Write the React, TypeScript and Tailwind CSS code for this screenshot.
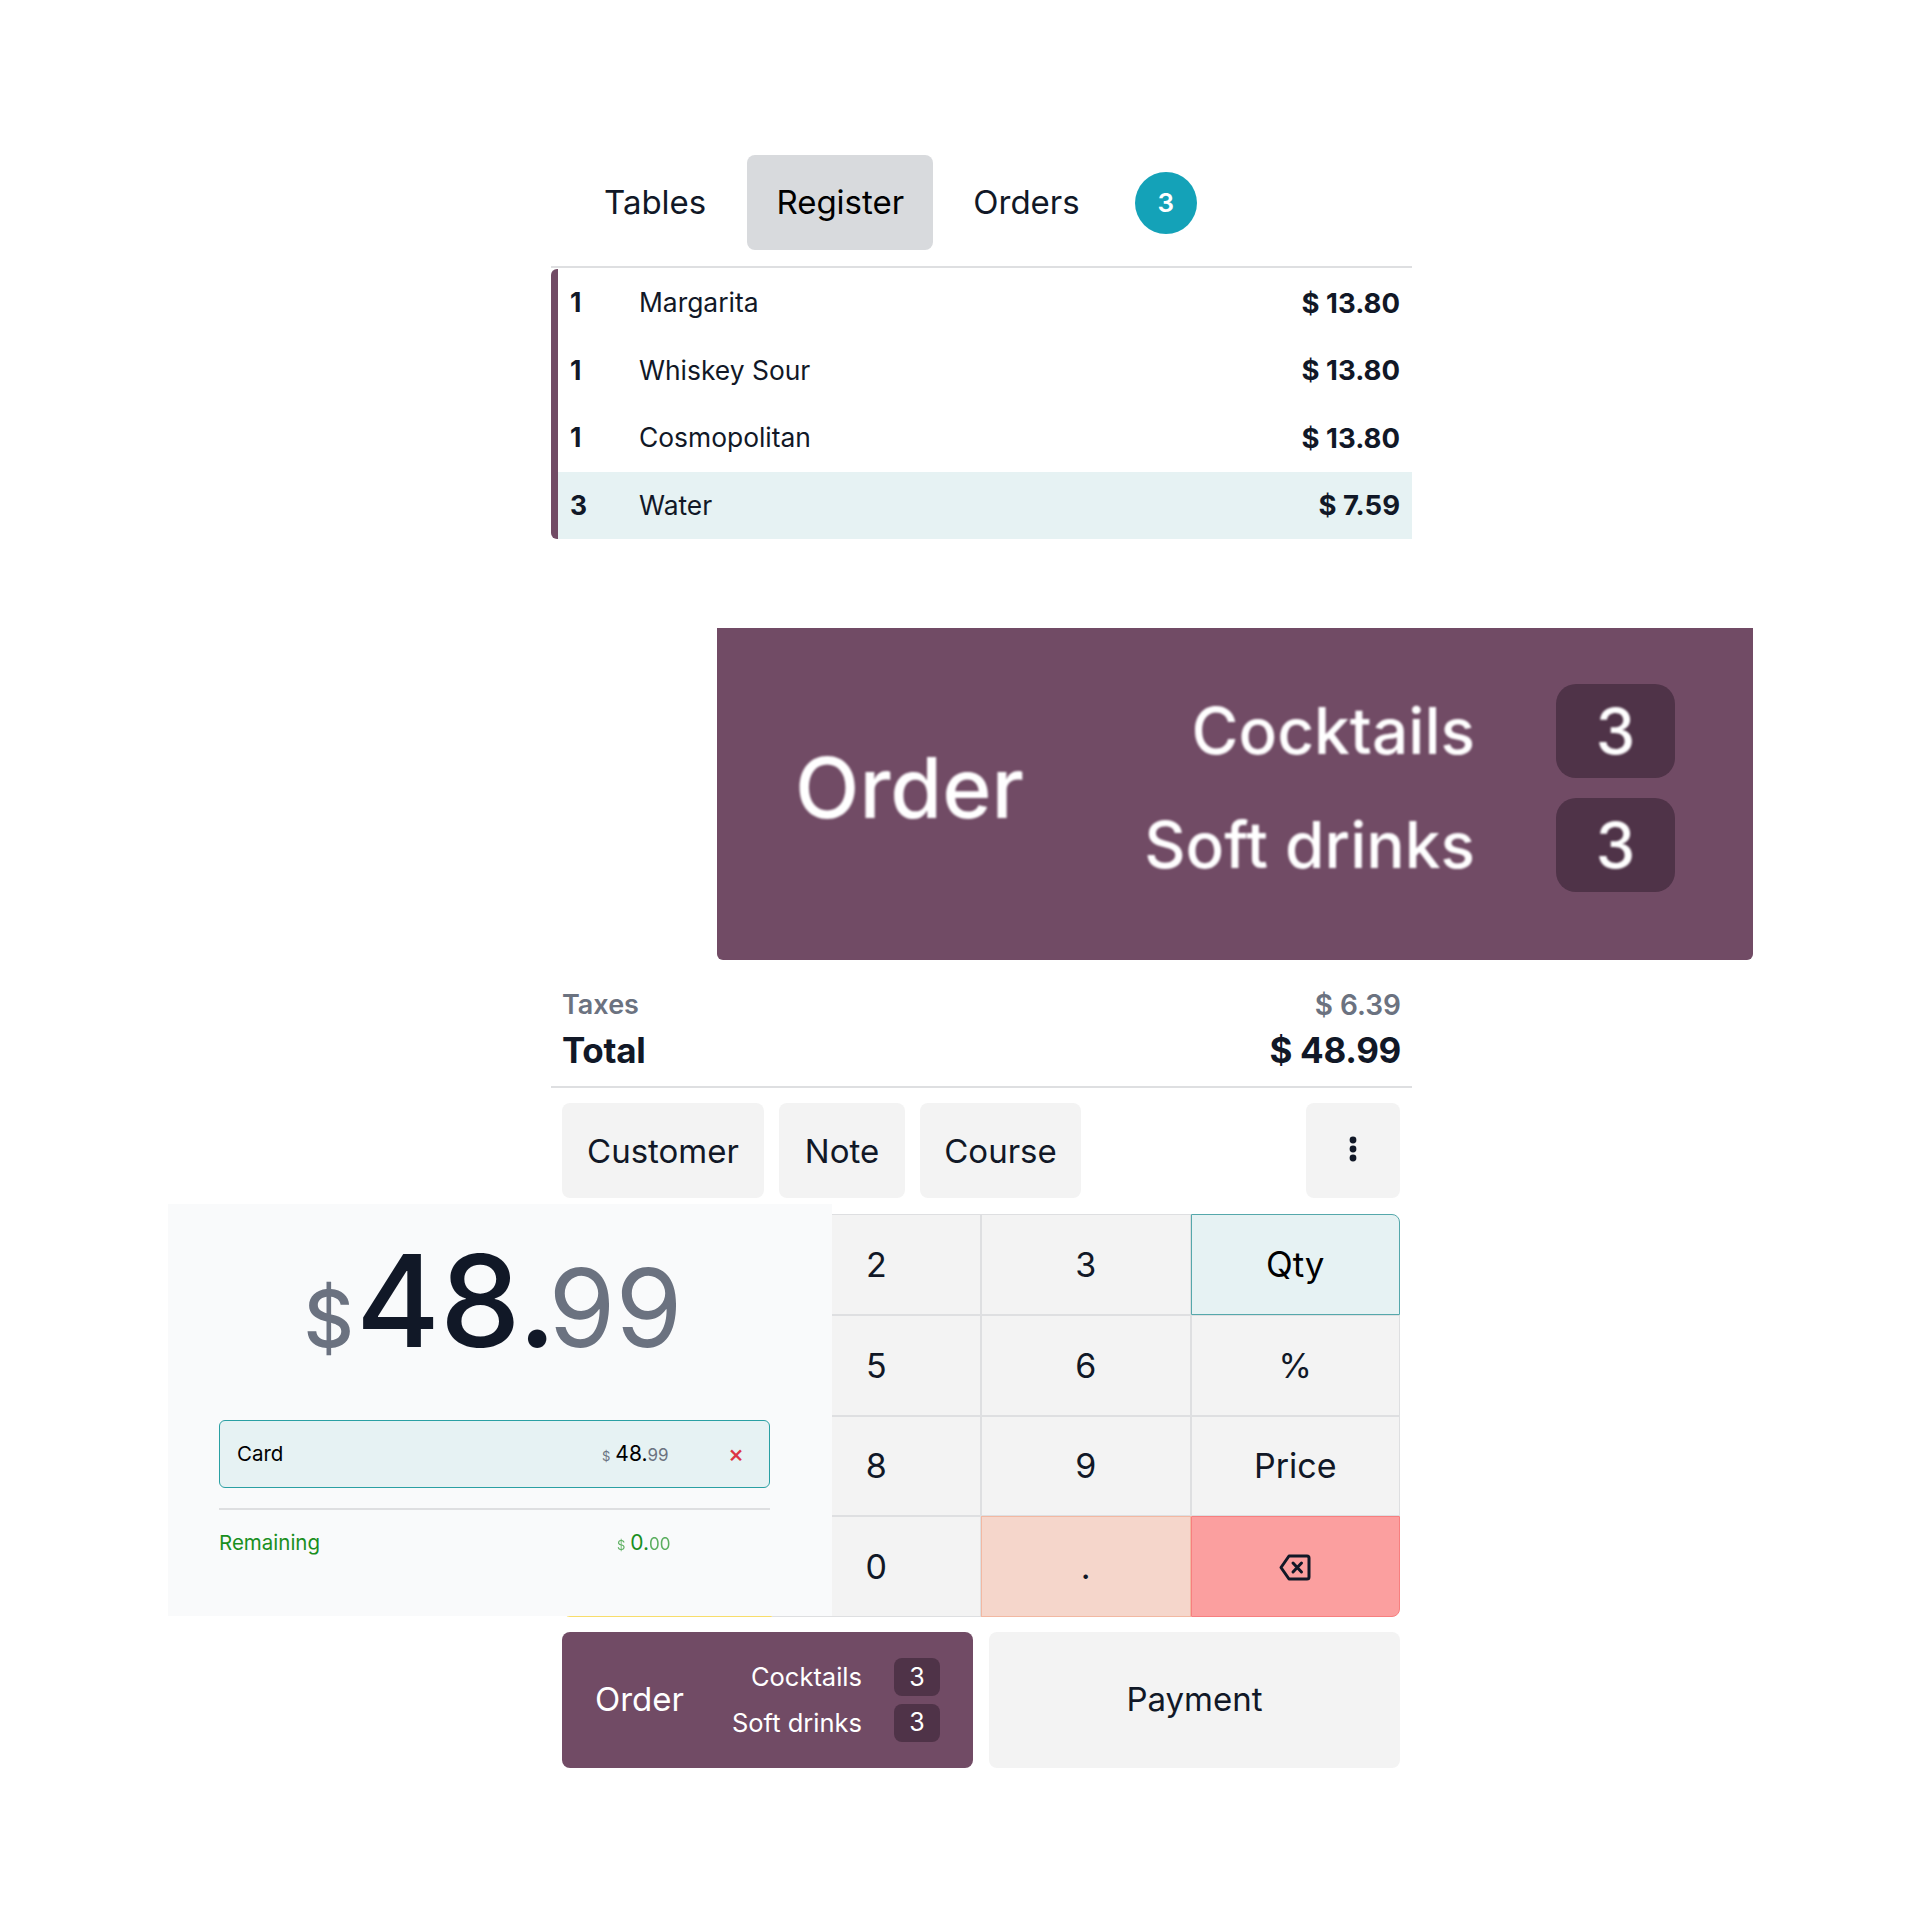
import type { ReactNode } from "react";

const items = [
  { qty: 1, name: "Margarita", price: "$ 13.80" },
  { qty: 1, name: "Whiskey Sour", price: "$ 13.80" },
  { qty: 1, name: "Cosmopolitan", price: "$ 13.80" },
  { qty: 3, name: "Water", price: "$ 7.59", selected: true },
];

function BackspaceIcon() {
  return (
    <svg width="32" height="27" viewBox="0 0 32 27" fill="none" stroke="#111827" strokeWidth="3" strokeLinejoin="round" strokeLinecap="round">
      <path d="M10 2h18a2 2 0 0 1 2 2v19a2 2 0 0 1-2 2H10l-8-11.500z" />
      <path d="M14 9l8.500 9M22.500 9l-8.500 9" />
    </svg>
  );
}

function Key({ children, className = "" }: { children?: ReactNode; className?: string }) {
  return (
    <div className={`flex items-center justify-center border pt-[1px] text-[34px] leading-none text-[#111827] ${className}`}>
      {children}
    </div>
  );
}

const plain = "border-[#dedfe1] bg-[#f3f3f3]";

function Keypad() {
  return (
    <div className="mt-4 ml-[11px] mr-[12px] grid h-[403px] grid-cols-4 grid-rows-4">
      <Key className={`rounded-tl-lg ${plain}`} />
      <Key className={plain}>2</Key>
      <Key className={plain}>3</Key>
      <Key className="rounded-tr-lg border-[#55a8ab] bg-[#e6f2f3]">
        <span className="text-[35px] text-black">Qty</span>
      </Key>
      <Key className={plain} />
      <Key className={plain}>5</Key>
      <Key className={plain}>6</Key>
      <Key className={plain}>%</Key>
      <Key className={plain} />
      <Key className={plain}>8</Key>
      <Key className={plain}>9</Key>
      <Key className={plain}>Price</Key>
      <Key className="rounded-bl-lg border-[#f8dd6b] bg-[#fdf5c9]" />
      <Key className={plain}>0</Key>
      <Key className="border-[#f2b8a2] bg-[#f5d6cb]">.</Key>
      <Key className="rounded-br-lg border-[#f77f7f] bg-[#fb9f9f]">
        <BackspaceIcon />
      </Key>
    </div>
  );
}

function ActionButton({ label, className }: { label: string; className: string }) {
  return (
    <button className={`flex h-[95px] items-center justify-center rounded-lg bg-[#f3f3f3] pt-[2px] text-[33px] text-[#111827] ${className}`}>
      {label}
    </button>
  );
}

function OrderSmall() {
  return (
    <div className="flex h-[136px] w-[411px] items-center justify-between rounded-lg bg-[#714b65] px-[33px] text-white">
      <span className="text-[33px]">Order</span>
      <div className="flex flex-col items-end gap-[7px]">
        {["Cocktails", "Soft drinks"].map((label) => (
          <div key={label} className="flex items-center gap-[32px]">
            <span className="text-[25.500px]">{label}</span>
            <span className="flex h-[38px] w-[46px] items-center justify-center rounded-lg bg-[#4f3348] text-[25px]">3</span>
          </div>
        ))}
      </div>
    </div>
  );
}

// upscaled crop of the order button, so the text is soft in the reference
function OrderZoomed() {
  return (
    <div className="mt-[89px] ml-[166px] flex h-[332px] w-[1036px] items-center justify-between rounded-b-md bg-[#714b65] pr-[78px] pb-[12px] pl-[78px] text-white">
      <span className="text-[84px] leading-none font-medium blur-[1px]">Order</span>
      <div className="flex flex-col items-end gap-[20px]">
        {["Cocktails", "Soft drinks"].map((label) => (
          <div key={label} className="flex items-center gap-[81px]">
            <span className="text-[64px] leading-none font-medium blur-[1px]">{label}</span>
            <span className="flex h-[94px] w-[119px] items-center justify-center rounded-[20px] bg-[#4f3348] text-[63px] leading-none">
              <span className="font-medium blur-[1px]">3</span>
            </span>
          </div>
        ))}
      </div>
    </div>
  );
}

function PaymentPanel() {
  return (
    <div className="absolute top-[1204px] left-[168px] h-[412px] w-[664px] bg-[#f9fafb]">
      <div className="flex h-[143px] items-baseline justify-center pt-[33px] pr-[14px] leading-none">
        <span className="mr-[2px] text-[78px] font-medium text-[#6b7280]">$</span>
        <span className="text-[128px] font-medium text-[#111827]">48.</span>
        <span className="-ml-[8px] text-[108px] text-[#6b7280]">99</span>
      </div>
      <div className="mt-[73px] mr-[62px] ml-[51px] flex h-[68px] items-center rounded-md border border-[#2aa0a3] bg-[#e6f2f3] pl-[17px] text-[20.500px] text-black">
        <span className="w-[365px]">Card</span>
        <span className="flex w-[66px] items-baseline whitespace-nowrap">
          <span className="mr-[5px] text-[13px] text-[#6b7280]">$</span>
          <span className="text-[21px]">48.</span>
          <span className="text-[17px] text-[#6b7280]">99</span>
        </span>
        <span className="ml-[60px] text-[24px] leading-none font-medium text-[#dc3545]">×</span>
      </div>
      <div className="mt-[20px] mr-[62px] ml-[51px] flex items-baseline border-t-2 border-[#dedfe1] pt-[17px] text-[20.500px] text-[#198f1e]">
        <span className="w-[398px]">Remaining</span>
        <span className="flex items-baseline whitespace-nowrap">
          <span className="mr-[5px] text-[13px] opacity-70">$</span>
          <span className="text-[21px]">0.</span>
          <span className="text-[17px] opacity-70">00</span>
        </span>
      </div>
    </div>
  );
}

export default function App() {
  return (
    <div className="relative h-[1920px] w-[1920px] bg-white font-['Inter',sans-serif] text-[#111827]">
      <div className="ml-[551px] w-[861px] pt-[155px]">
        <div className="flex items-center border-b-2 border-[#dedfe1] pb-[16px] pl-[25px]">
          <div className="flex h-[95px] items-center px-[28px] pt-[1px] text-[33px]">Tables</div>
          <div className="ml-[13px] flex h-[95px] w-[186px] items-center justify-center rounded-lg bg-[#d8dadd] pt-[1px] text-[33px] text-black">Register</div>
          <div className="ml-[12px] flex h-[95px] items-center px-[28px] pt-[1px] text-[33px]">Orders</div>
          <div className="ml-[27px] flex h-[62px] w-[62px] items-center justify-center rounded-full bg-[#14a2b8] text-[26px] font-semibold text-white">3</div>
        </div>
        <div className="mt-px flex">
          <div className="w-[7px] rounded-l-md bg-[#714b65]" />
          <div className="flex-1">
            {items.map((item) => (
              <div key={item.name} className={`flex h-[67.500px] items-center pt-[1px] pr-[12px] text-[26.400px] ${item.selected ? "bg-[#e6f2f3]" : ""}`}>
                <span className="w-[81px] pl-[12px] font-bold">{item.qty}</span>
                <span className="flex-1">{item.name}</span>
                <span className="text-[27.500px] font-bold">{item.price}</span>
              </div>
            ))}
          </div>
        </div>

        <OrderZoomed />

        <div className="border-b-2 border-[#dedfe1] px-[11px] pt-[27px] pb-[12px]">
          <div className="flex items-center justify-between text-[27px] leading-[36px] font-semibold text-[#6b7280]">
            <span>Taxes</span>
            <span className="text-[28px]">$ 6.39</span>
          </div>
          <div className="mt-[3px] flex items-center justify-between text-[35px] leading-[48px] font-bold tracking-[-0.3px]">
            <span>Total</span>
            <span>$ 48.99</span>
          </div>
        </div>

        <div className="mt-[15px] mr-[12px] ml-[11px] flex gap-[15px]">
          <ActionButton label="Customer" className="w-[202px]" />
          <ActionButton label="Note" className="w-[126px]" />
          <ActionButton label="Course" className="w-[161px]" />
          <button className="ml-auto flex h-[95px] w-[94px] items-center justify-center rounded-lg bg-[#f3f3f3]">
            <svg width="8" height="26" viewBox="0 0 8 26" fill="#111827" className="-mt-[3px]">
              <circle cx="4" cy="4" r="3.400" />
              <circle cx="4" cy="13" r="3.400" />
              <circle cx="4" cy="22" r="3.400" />
            </svg>
          </button>
        </div>

        <Keypad />

        <div className="mt-[15px] mr-[12px] ml-[11px] flex gap-[16px]">
          <OrderSmall />
          <button className="flex h-[136px] flex-1 items-center justify-center rounded-lg bg-[#f3f3f3] text-[33px] text-[#111827]">Payment</button>
        </div>
      </div>

      <PaymentPanel />
    </div>
  );
}
